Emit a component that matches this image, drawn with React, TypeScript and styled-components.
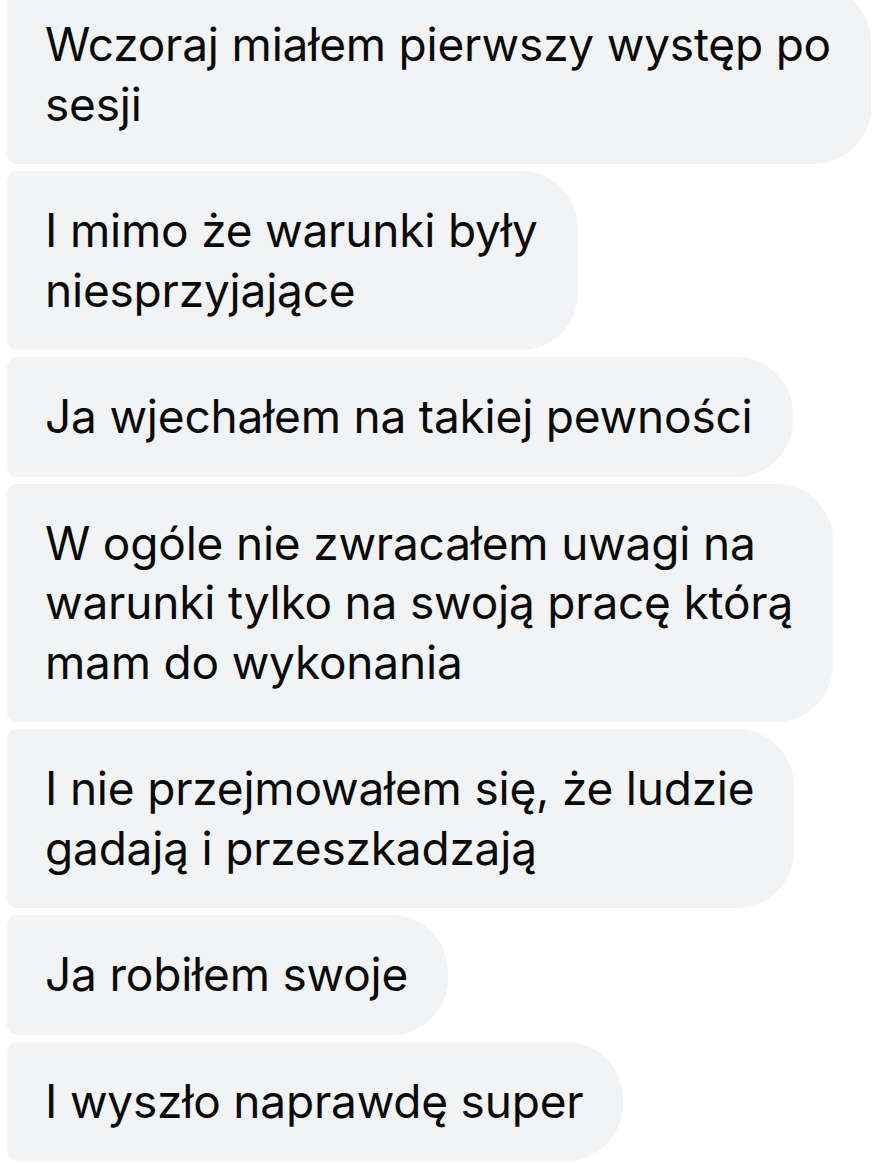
import React from "react";
import styled, { createGlobalStyle } from "styled-components";

const Global = createGlobalStyle`
  html, body { margin: 0; padding: 0; background: #ffffff; }
  body { overflow: hidden; }
`;

const Thread = styled.div`
  display: flex;
  flex-direction: column;
  align-items: flex-start;
  gap: 7px;
  margin-top: -15px;
  padding: 0 0 0 7px;
  font-family: Inter, "Noto Sans", "Liberation Sans", sans-serif;
`;

const Bubble = styled.div`
  background: #f2f3f5;
  color: #0a0a0a;
  border-radius: 10px 57px 57px 10px;
  padding: 30px 40px 30px 38px;
  font-size: 46px;
  line-height: 59.5px;
  letter-spacing: -0.2px;
`;

const Line = styled.div`
  white-space: nowrap;
`;

const messages: string[][] = [
  ["Wczoraj miałem pierwszy występ po", "sesji"],
  ["I mimo że warunki były", "niesprzyjające"],
  ["Ja wjechałem na takiej pewności"],
  ["W ogóle nie zwracałem uwagi na", "warunki tylko na swoją pracę którą", "mam do wykonania"],
  ["I nie przejmowałem się, że ludzie", "gadają i przeszkadzają"],
  ["Ja robiłem swoje"],
  ["I wyszło naprawdę super"],
];

export default function App() {
  return (
    <>
      <Global />
      <Thread>
        {messages.map((lines, i) => (
          <Bubble key={i}>
            {lines.map((l, j) => (
              <Line key={j}>{l}</Line>
            ))}
          </Bubble>
        ))}
      </Thread>
    </>
  );
}
